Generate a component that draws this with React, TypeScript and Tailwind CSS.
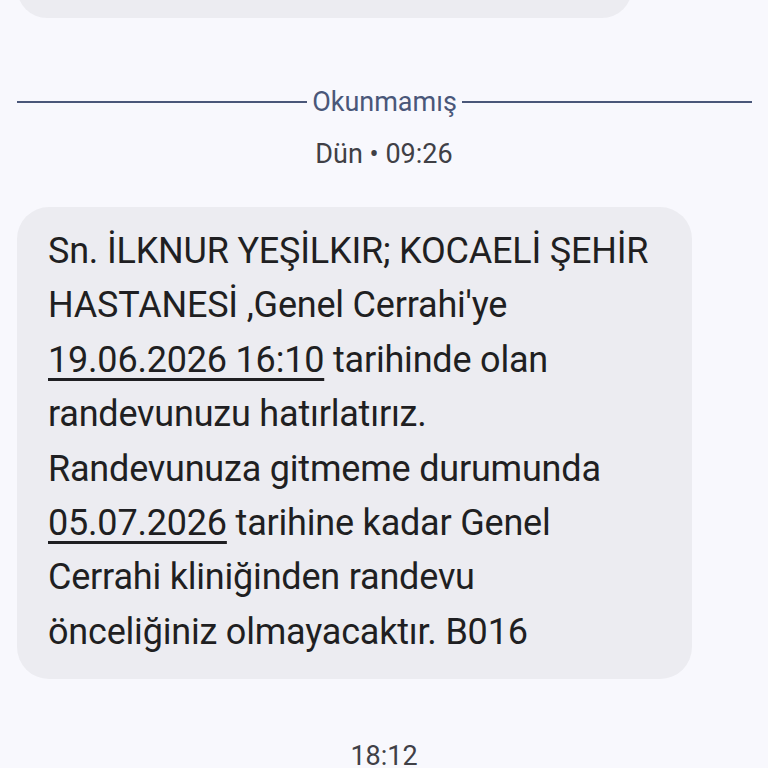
import React from "react";

export default function App() {
  const u = "underline decoration-[3px] underline-offset-[6px]";
  return (
    <div
      className="w-[768px] h-[768px] overflow-hidden bg-[#f8f8fd] flex flex-col"
      style={{ fontFamily: "Roboto, 'Noto Sans', sans-serif" }}
    >
      <div className="ml-[17px] w-[615px] h-[80px] mt-[-62px] shrink-0 rounded-[30px] bg-[#ececf1]" />

      <div className="mt-[69px] ml-[17px] w-[735px] flex items-center gap-[5px] text-[#4a5779]">
        <div className="flex-1 h-[2px] bg-[#4a5779]" />
        <span className="text-[27px] leading-[30px]">Okunmamış</span>
        <div className="flex-1 h-[2px] bg-[#4a5779]" />
      </div>

      <div className="mt-[22px] text-center text-[27px] leading-[30px] text-[#404046]">
        Dün • 09:26
      </div>

      <div className="mt-[38px] ml-[17px] w-[675px] shrink-0 rounded-[32px] bg-[#ececf1] pl-[31px] pr-[10px] pt-[17px] pb-[20px] text-[#1f1f22] text-[36px] leading-[54.4px] tracking-[-0.2px] whitespace-nowrap">
        <div>Sn. İLKNUR YEŞİLKIR; KOCAELİ ŞEHİR</div>
        <div>HASTANESİ ,Genel Cerrahi'ye</div>
        <div>
          <span className={u}>19.06.2026 16:10</span> tarihinde olan
        </div>
        <div>randevunuzu hatırlatırız.</div>
        <div>Randevunuza gitmeme durumunda</div>
        <div>
          <span className={u}>05.07.2026</span> tarihine kadar Genel
        </div>
        <div>Cerrahi kliniğinden randevu</div>
        <div>önceliğiniz olmayacaktır. B016</div>
      </div>

      <div className="mt-[62px] shrink-0 text-center text-[27px] leading-[30px] text-[#404046]">18:12</div>
    </div>
  );
}
